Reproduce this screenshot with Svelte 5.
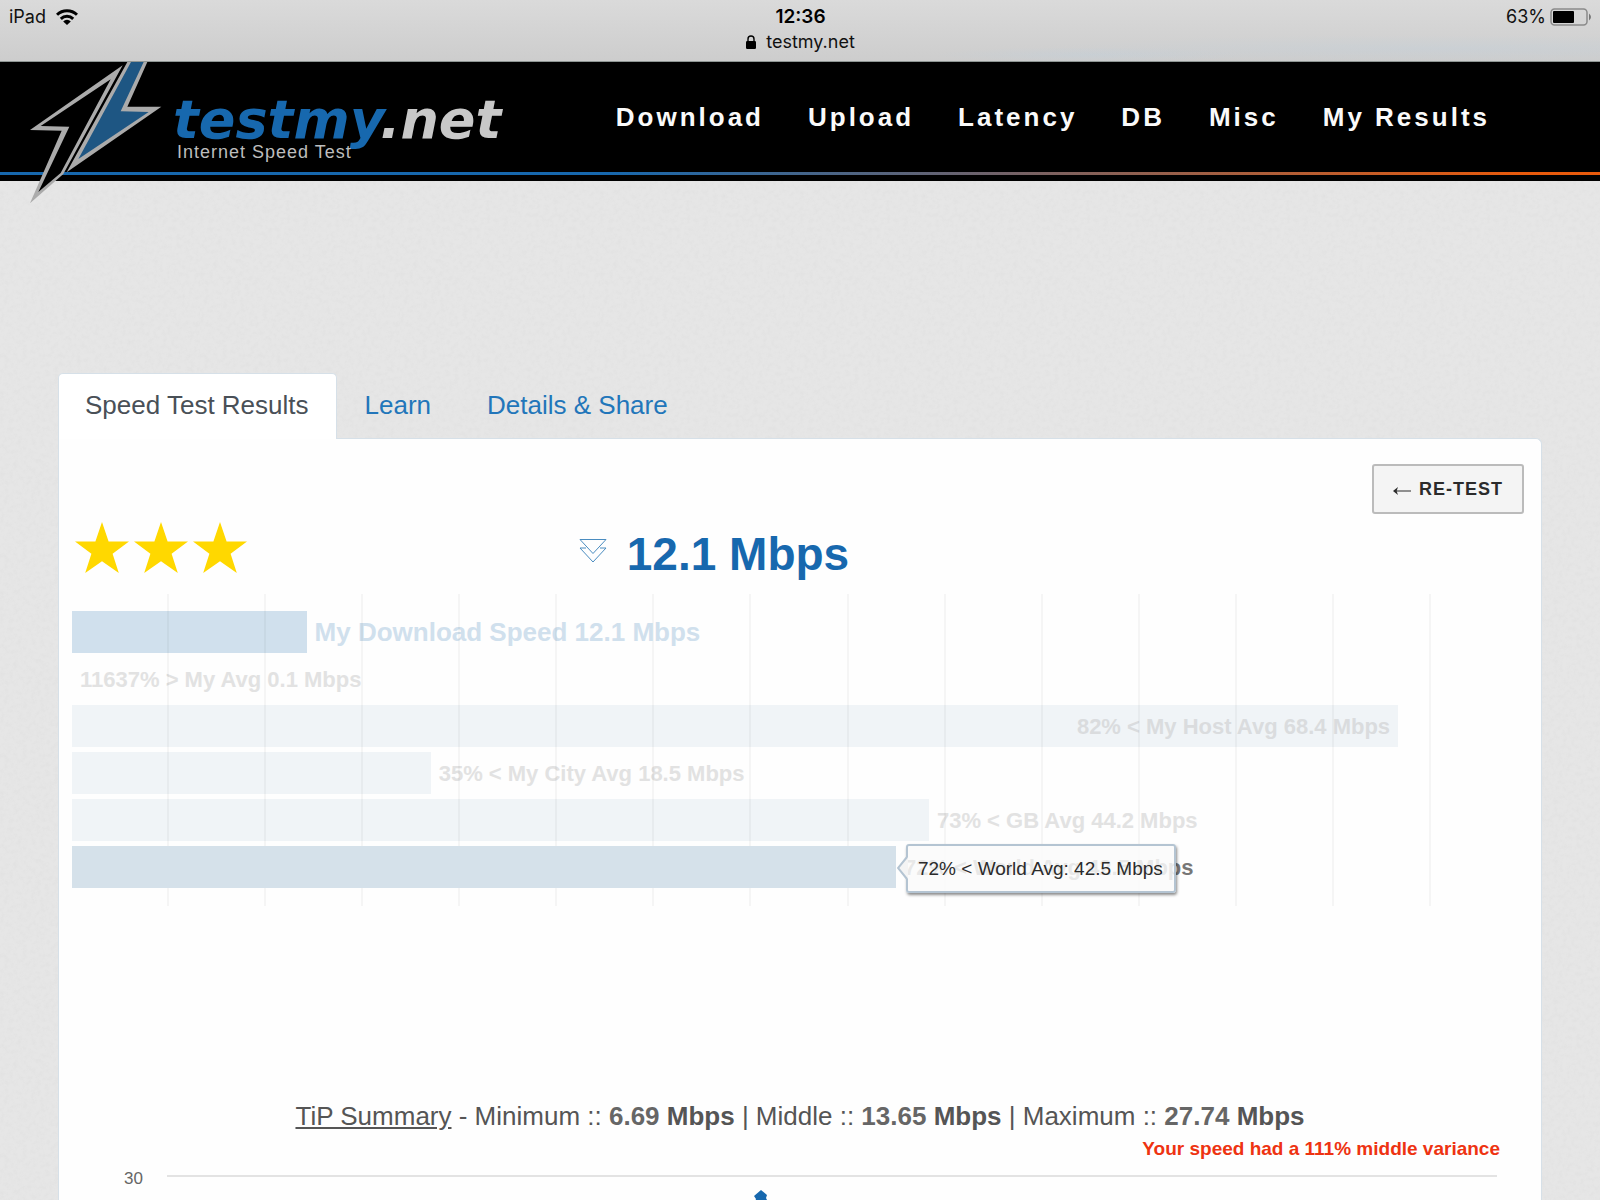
<script lang="ts">
  interface Bar {
    value: number;
    label: string;
    kind?: "mine" | "active";
    inside?: boolean;
    tip?: string;
  }

  const AXIS_MAX = 75.1;
  const ticks = Array.from({ length: 15 }, (_, i) => i);

  const nav = ["Download", "Upload", "Latency", "DB", "Misc", "My Results"];
  const tabs = ["Speed Test Results", "Learn", "Details & Share"];

  const bars: Bar[] = [
    { value: 12.1, label: "My Download Speed 12.1 Mbps", kind: "mine" },
    { value: 0, label: "11637% > My Avg 0.1 Mbps" },
    { value: 68.4, label: "82% < My Host Avg 68.4 Mbps", inside: true },
    { value: 18.5, label: "35% < My City Avg 18.5 Mbps" },
    { value: 44.2, label: "73% < GB Avg 44.2 Mbps" },
    {
      value: 42.5,
      label: "72% < World Avg 42.5 Mbps",
      kind: "active",
      tip: "72% < World Avg: 42.5 Mbps",
    },
  ];

  let activeTab = $state(0);

  function width(value: number) {
    return `${(value / AXIS_MAX) * 100}%`;
  }
</script>

<div class="screen">
  <div class="status">
    <div class="status-row">
      <span class="device">
        iPad
        <svg class="wifi" viewBox="0 0 22 16" aria-hidden="true">
          <path d="M1 5.8a14.2 14.2 0 0 1 20 0" />
          <path d="M4.8 9.8a9 9 0 0 1 12.4 0" />
          <path class="dot" d="M11 16 7.2 12.4a5.4 5.4 0 0 1 7.6 0z" />
        </svg>
      </span>
      <span class="clock">12:36</span>
      <span class="battery">
        63%
        <svg viewBox="0 0 42 18" aria-hidden="true">
          <rect class="shell" x="1" y="1" width="36" height="16" rx="3.5" />
          <rect x="3" y="3" width="21" height="12" rx="1" />
          <path class="cap" d="M39 5.5q4 3.5 0 7z" />
        </svg>
      </span>
    </div>
    <div class="address">
      <svg viewBox="0 0 10 14" aria-hidden="true">
        <rect x="0" y="6" width="10" height="8" rx="1.2" />
        <path d="M2 6.5V4a3 3 0 0 1 6 0v2.5" />
      </svg>
      testmy.net
    </div>
  </div>

  <header>
    <a class="logo" href="#home">
      <svg class="bolt" viewBox="0 12 450 438" aria-hidden="true">
        <path class="silver" d="M308 22 30 216 125 218 30 436 130 348z" />
        <path class="dark" d="M272 64 62 204 148 206 55 402 122 345z" />
        <path class="silver" d="M322 12H382L322 146H424L140 343z" />
        <path class="blue" d="M333 12H371L302 160 386 162 175 303z" />
      </svg>
      <span class="wordmark">
        <span class="name">testmy<span class="tld">.net</span></span>
        <span class="tagline">Internet Speed Test</span>
      </span>
    </a>
    <nav>
      {#each nav as item}
        <a href="#{item}">{item}</a>
      {/each}
    </nav>
  </header>

  <main>
    <div class="tabs" role="tablist">
      {#each tabs as tab, i}
        <button
          role="tab"
          aria-selected={activeTab === i}
          class:active={activeTab === i}
          onclick={() => (activeTab = i)}>{tab}</button>
      {/each}
    </div>

    <section class="panel">
      <div class="actions">
        <button class="retest">
          <svg viewBox="0 0 18 10" aria-hidden="true">
            <path class="shaft" d="M2 5H18" />
            <path d="M0 5 5 1 3.6 5 5 9z" />
          </svg>
          RE-TEST
        </button>
      </div>

      <div class="headline">
        <div class="stars" role="img" aria-label="3 stars">
          {#each [1, 2, 3] as n (n)}
            <svg viewBox="0 0 54 51" aria-hidden="true">
              <path d="M27 0 33.6 19.4 54 19.5 37.6 31.8 43.8 51 27 39.3 10.2 51 16.4 31.8 0 19.5 20.4 19.4z" />
            </svg>
          {/each}
        </div>
        <h1>
          <svg viewBox="0 0 28 26" aria-hidden="true">
            <path d="M1 1.5H27L14 15.5z" />
            <path d="M7 10H1L14 24 27 10H21" />
          </svg>
          12.1 Mbps
        </h1>
      </div>

      <div class="chart">
        {#each bars as bar}
          <div class="row {bar.kind ?? ''}">
            <div class="bar" style:width={width(bar.value)}>
              {#if bar.inside}<span class="label">{bar.label}</span>{/if}
              {#if bar.tip}
                <div class="tooltip" role="tooltip">
                  <svg viewBox="0 0 11 24" aria-hidden="true">
                    <path class="fill" d="M11 1 1 12 11 23z" />
                    <path class="edge" d="M10 1 1 12 10 23" />
                  </svg>
                  {bar.tip}
                </div>
              {/if}
            </div>
            {#if !bar.inside}<span class="label">{bar.label}</span>{/if}
          </div>
        {/each}
        <div class="grid" aria-hidden="true">
          {#each ticks as t (t)}<i></i>{/each}
        </div>
      </div>

      <p class="summary">
        <a href="#tip">TiP Summary</a> - Minimum :: <b>6.69 <em>Mbps</em></b> | Middle :: <b>13.65 <em>Mbps</em></b> | Maximum :: <b>27.74 <em>Mbps</em></b>
      </p>
      <p class="variance">Your speed had a 111% middle variance</p>

      <div class="plot">
        <span class="tick">30</span>
        <div class="area">
          <svg viewBox="0 0 14 12" aria-hidden="true">
            <path d="M7 0 13 5 12 8 14 12H1L2 9 0 6z" />
          </svg>
        </div>
      </div>
    </section>
  </main>
</div>

<style>
  :global(body) {
    margin: 0;
  }

  .screen {
    display: flex;
    flex-direction: column;
    height: 100vh;
    overflow: hidden;
    font-family: "Liberation Sans", Arial, sans-serif;
    background-color: #e6e6e6;
    background-image: url("data:image/svg+xml,%3Csvg xmlns='http://www.w3.org/2000/svg' width='200' height='200'%3E%3Cfilter id='n'%3E%3CfeTurbulence type='fractalNoise' baseFrequency='.22' numOctaves='3' stitchTiles='stitch'/%3E%3CfeColorMatrix values='0 0 0 0 .5 0 0 0 0 .5 0 0 0 0 .5 .2 0 0 0 -.08'/%3E%3C/filter%3E%3Crect width='200' height='200' filter='url(%23n)'/%3E%3C/svg%3E");
  }

  .status {
    box-sizing: border-box;
    flex: none;
    height: 62px;
    padding: 4px 8px 0 9px;
    border-bottom: 1px solid #8f9694;
    background:
      radial-gradient(ellipse at 90% 80%, rgba(190, 208, 222, 0.3), transparent 20%),
      radial-gradient(ellipse at 68% 90%, rgba(190, 208, 222, 0.35), transparent 10%),
      linear-gradient(#dadada, #cdcdcd);
    font-family: Inter, sans-serif;
    font-size: 18px;
    color: #111;
  }

  .status-row {
    display: grid;
    grid-template-columns: 1fr auto 1fr;
    align-items: center;
    line-height: 25px;
  }

  .device,
  .battery,
  .address {
    display: flex;
    align-items: center;
  }

  .device { gap: 10px; }

  .wifi {
    width: 22px;
    height: 16px;
    fill: none;
    stroke: #000;
    stroke-width: 3;
  }

  .wifi .dot { fill: #000; stroke: none; }

  .clock {
    font-weight: 600;
    font-size: 19px;
    color: #000;
  }

  .battery {
    justify-content: flex-end;
    gap: 4px;
  }

  .battery svg {
    width: 42px;
    height: 18px;
  }

  .shell { fill: none; stroke: #8a8a8a; stroke-width: 1.5; }
  .cap { fill: #777; }

  .address {
    justify-content: center;
    gap: 10px;
    line-height: 26px;
  }

  .address svg {
    width: 10px;
    height: 14px;
  }

  .address path { fill: none; stroke: #000; stroke-width: 1.4; }

  header {
    box-sizing: border-box;
    flex: none;
    display: flex;
    justify-content: space-between;
    height: 119px;
    padding: 0 110px 0 20px;
    background:
      linear-gradient(90deg, #1768ae 38%, #e85a0c 95%) 0 110px / 100% 3px no-repeat,
      #000;
  }

  a { text-decoration: none; }

  .logo {
    display: flex;
  }

  .bolt {
    flex: none;
    position: relative;
    width: 150px;
    height: 146px;
  }

  .silver { fill: #ababab; }
  .dark { fill: #000; }
  .blue { fill: #1e5683; }

  .wordmark {
    display: flex;
    flex-direction: column;
    padding-top: 36px;
  }

  .name {
    padding-left: 3px;
    font: italic 700 54px/44px "DejaVu Sans", sans-serif;
    color: #1768ae;
  }

  .tld { color: #c8c8c8; }

  .tagline {
    padding-left: 7px;
    font-size: 18px;
    line-height: 20px;
    letter-spacing: 1px;
    color: #bdbdbd;
  }

  nav {
    display: flex;
    gap: 44px;
    padding-top: 39px;
  }

  nav a {
    font-size: 26px;
    line-height: 32px;
    font-weight: 700;
    letter-spacing: 3px;
    white-space: nowrap;
    color: #fafafa;
  }

  main {
    flex: 1;
    display: flex;
    flex-direction: column;
    min-height: 0;
    padding: 192px 58px 0;
  }

  .tabs {
    display: flex;
    gap: 1px;
  }

  .tabs button {
    margin-bottom: -1px;
    padding: 0 27px 3px 26px;
    border: 1px solid transparent;
    border-bottom: 0;
    border-radius: 5px 5px 0 0;
    background: none;
    font-family: inherit;
    font-size: 26px;
    line-height: 62px;
    color: #2276ba;
  }

  .tabs .active {
    position: relative;
    border-color: #d6e0e8;
    background: #fff;
    color: #495057;
  }

  .panel {
    flex: 1;
    padding: 25px 13px 0;
    border: 1px solid #d6e0e8;
    border-bottom: 0;
    border-radius: 0 6px 0 0;
    background: #fefefe;
  }

  .actions {
    display: flex;
    justify-content: flex-end;
    padding-right: 4px;
  }

  .retest {
    display: flex;
    align-items: center;
    gap: 8px;
    height: 50px;
    padding: 0 19px;
    border: 2px solid #bbb;
    border-radius: 3px;
    background: #f4f4f4;
    font-family: inherit;
    font-size: 18px;
    font-weight: 700;
    letter-spacing: 1px;
    color: #2b2b2b;
  }

  .retest svg {
    width: 18px;
    height: 10px;
    margin-top: 3px;
    fill: #2b2b2b;
  }

  .shaft { stroke: #2b2b2b; }

  .headline {
    display: grid;
    grid-template-columns: 1fr auto 1fr;
    height: 80px;
    padding: 8px 3px 0;
    box-sizing: border-box;
  }

  .stars {
    display: flex;
    gap: 5px;
  }

  .stars svg {
    width: 54px;
    height: 51px;
    fill: #ffd800;
  }

  h1 {
    display: flex;
    gap: 20px;
    margin: 0;
    padding-right: 172px;
    font-size: 46px;
    line-height: 64px;
    color: #1768ae;
  }

  h1 svg {
    width: 28px;
    height: 26px;
    margin-top: 16px;
    fill: none;
    stroke: #4a8cc0;
  }

  .chart {
    position: relative;
    display: flex;
    flex-direction: column;
    gap: 5px;
    padding: 17px 0 18px;
  }

  .row {
    display: flex;
    align-items: center;
    height: 42px;
    font-size: 22px;
    font-weight: 700;
    color: #e2e2e2;
  }

  .bar {
    flex: none;
    display: flex;
    align-items: center;
    justify-content: flex-end;
    height: 42px;
    background: #f0f4f7;
    color: #dadcde;
  }

  .label {
    padding: 2px 8px 0;
    white-space: nowrap;
  }

  .mine { font-size: 26px; color: #d0e0ed; }
  .mine .bar { background: #d0e0ed; }
  .mine .label { padding-top: 0; }

  .row.active { color: #777; }

  .active .bar {
    position: relative;
    z-index: 2;
    background: #d5e1ea;
  }

  .active .label {
    position: relative;
    z-index: 1;
  }

  .tooltip {
    position: absolute;
    left: calc(100% + 10px);
    top: -2px;
    padding: 0 11px 0 10px;
    border: 2px solid #b4c4d2;
    border-radius: 3px;
    background: rgba(250, 250, 250, 0.86);
    box-shadow: 1px 2px 3px rgba(0, 0, 0, 0.45);
    font-size: 19px;
    font-weight: 400;
    line-height: 45px;
    white-space: nowrap;
    color: #2b2b2b;
  }

  .tooltip svg {
    position: absolute;
    left: -11px;
    top: 10px;
    width: 11px;
    height: 24px;
  }

  .tooltip .fill { fill: #f4f4f4; }
  .tooltip .edge { fill: none; stroke: #b4c4d2; stroke-width: 2; }

  .grid {
    position: absolute;
    inset: 0;
    display: grid;
    grid-template-columns: repeat(15, 1fr);
  }

  .grid i { border-right: 2px solid rgba(0, 0, 0, 0.035); }
  .grid i:last-child { border-color: transparent; }

  .summary {
    margin: 0;
    padding-top: 192px;
    text-align: center;
    font-size: 26px;
    line-height: 36px;
    color: #555;
  }

  .summary a {
    color: #555;
    text-decoration: underline;
  }

  .summary b { color: #666; }

  .summary em {
    font-style: normal;
    color: #555;
  }

  .variance {
    margin: 0;
    padding-right: 28px;
    text-align: right;
    font-size: 19px;
    line-height: 30px;
    font-weight: 700;
    color: #ee3311;
  }

  .plot {
    display: flex;
    gap: 24px;
    padding: 5px 31px 0 52px;
  }

  .tick {
    font-size: 17px;
    line-height: 20px;
    color: #666;
  }

  .area {
    flex: 1;
    margin-top: 6px;
    border-top: 2px solid #e3e3e3;
    padding: 13px 0 0 587px;
  }

  .area svg {
    display: block;
    width: 14px;
    height: 12px;
    fill: #1768ae;
  }
</style>
